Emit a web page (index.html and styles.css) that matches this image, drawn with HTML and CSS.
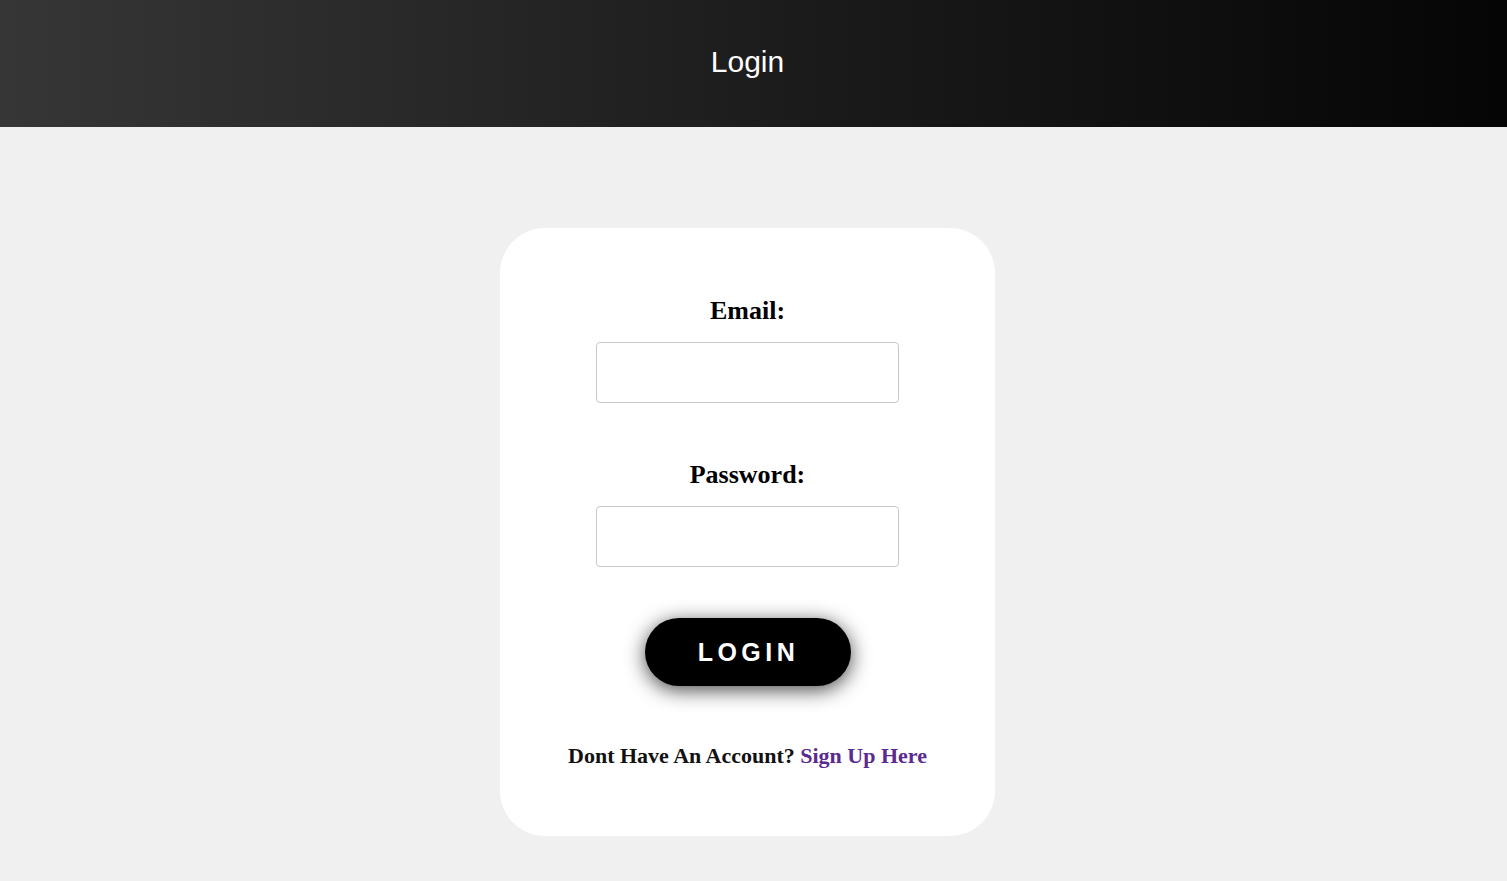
FILE: index.html
```html
<!DOCTYPE html>
<html>
<head>
<meta charset="utf-8">
<title>Login</title>
<link rel="stylesheet" href="styles.css">
</head>
<body>
<header class="topbar">
  <h1 class="topbar-title">Login</h1>
</header>
<main class="page">
  <form class="card">
    <label class="field-label" for="email">Email:</label>
    <input class="field-input" id="email" type="email">
    <label class="field-label field-label-second" for="password">Password:</label>
    <input class="field-input" id="password" type="password">
    <button class="login-btn" type="button">LOGIN</button>
    <p class="signup">Dont Have An Account? <a class="signup-link" href="#">Sign Up Here</a></p>
  </form>
</main>
</body>
</html>
```

FILE: styles.css
```css
html, body {
  margin: 0;
  padding: 0;
}
body {
  background: #f0f0f0;
  font-family: "Liberation Serif", "Times New Roman", serif;
  min-height: 881px;
}
.topbar {
  height: 127px;
  padding-right: 12px;
  padding-bottom: 4px;
  box-sizing: border-box;
  background: linear-gradient(to right, #363636 0%, #2a2a2a 25%, #1a1a1a 55%, #050505 100%);
  display: flex;
  align-items: center;
  justify-content: center;
}
.topbar-title {
  margin: 0;
  color: #ffffff;
  font-family: "Liberation Sans", Arial, sans-serif;
  font-weight: normal;
  font-size: 30px;
}
.page {
  display: flex;
  justify-content: center;
  padding-top: 101px;
  padding-right: 12px;
}
.card {
  width: 495px;
  height: 608px;
  box-sizing: border-box;
  background: #ffffff;
  border-radius: 45px;
  display: flex;
  flex-direction: column;
  align-items: center;
  padding-top: 68px;
}
.field-label {
  font-weight: bold;
  font-size: 26px;
  line-height: 30px;
  color: #000;
}
.field-label-second {
  margin-top: 57px;
}
.field-input {
  margin-top: 16px;
  width: 303px;
  height: 61px;
  box-sizing: border-box;
  border: 1px solid #c8c8c8;
  border-radius: 4px;
  background: #fff;
  outline: none;
}
.login-btn {
  margin-top: 51px;
  width: 206px;
  height: 68px;
  border: none;
  border-radius: 34px;
  background: #000;
  color: #fff;
  font-family: "Liberation Sans", Arial, sans-serif;
  font-weight: bold;
  font-size: 25px;
  letter-spacing: 4.5px;
  padding: 0 0 0 2px;
  box-shadow: 0 4px 20px rgba(0, 0, 0, 0.72);
  cursor: pointer;
}
.signup {
  margin: 57px 0 0 0;
  font-weight: bold;
  font-size: 22px;
  line-height: 26px;
  color: #111;
}
.signup-link {
  color: #5b2a91;
  text-decoration: none;
}
```
